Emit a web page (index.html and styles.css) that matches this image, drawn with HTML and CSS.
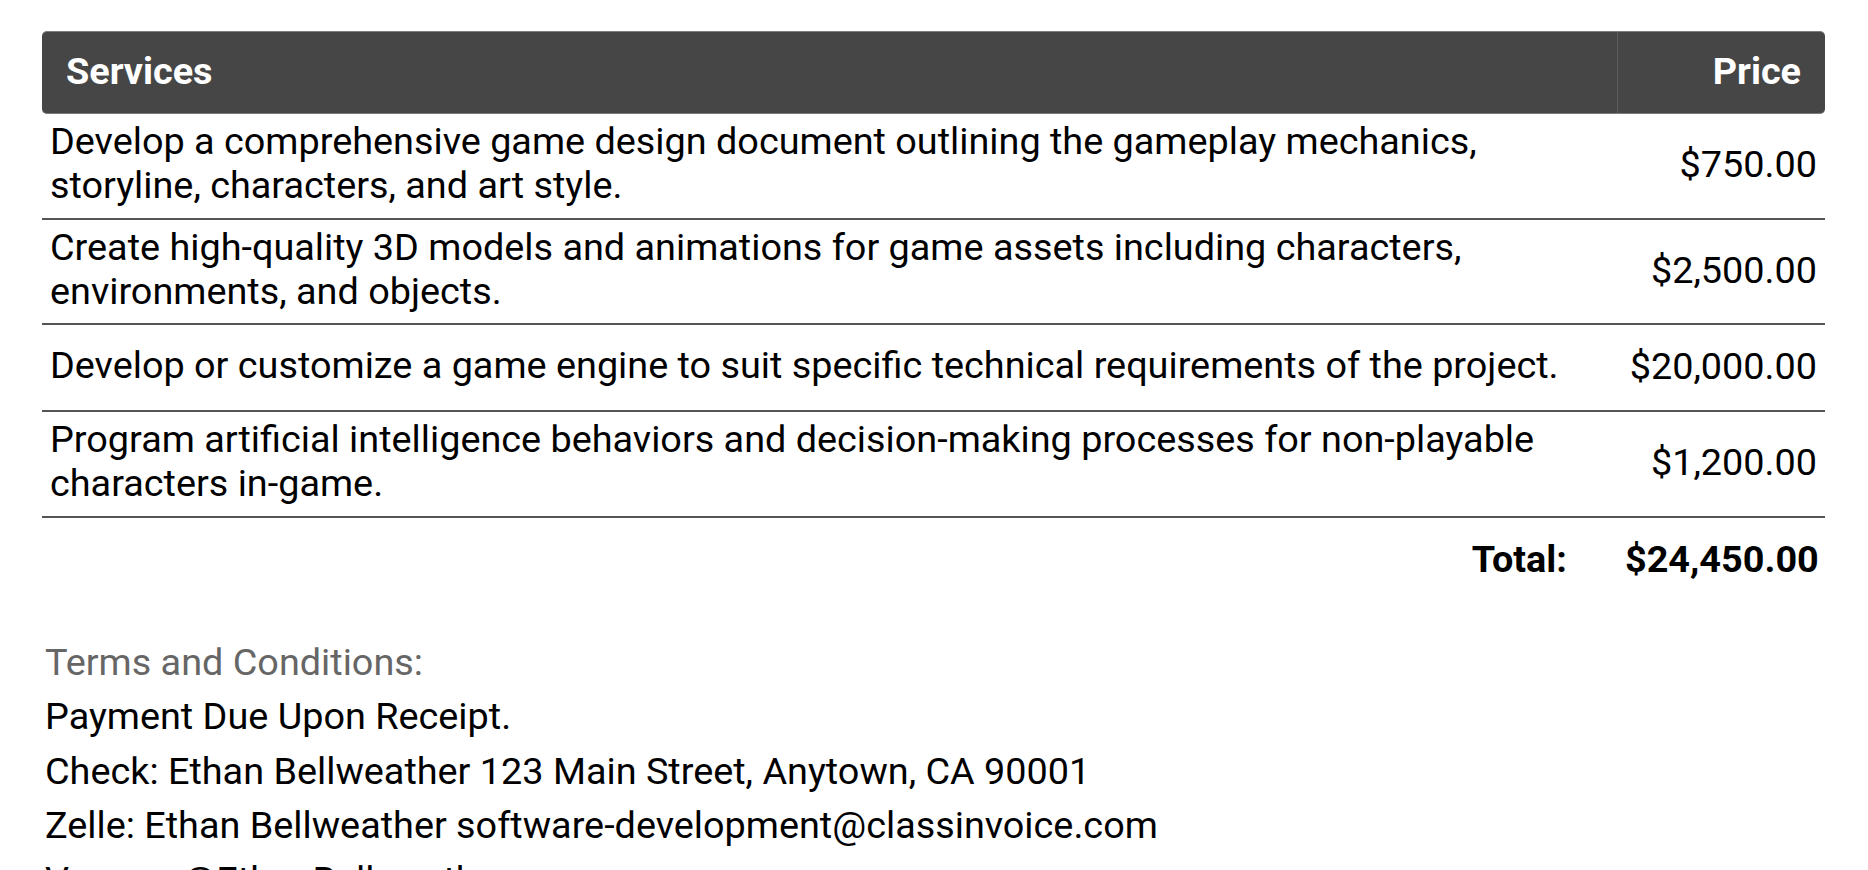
FILE: index.html
```html
<!DOCTYPE html>
<html lang="en">
<head>
<meta charset="utf-8">
<title>Invoice</title>
<link rel="stylesheet" href="styles.css">
</head>
<body>
<main class="invoice">
  <table class="items">
    <colgroup>
      <col class="col-desc">
      <col class="col-price">
    </colgroup>
    <thead>
      <tr>
        <th class="th-services">Services</th>
        <th class="th-price">Price</th>
      </tr>
    </thead>
    <tbody>
      <tr>
        <td class="desc">Develop a comprehensive game design document outlining the gameplay mechanics, storyline, characters, and art style.</td>
        <td class="price">$750.00</td>
      </tr>
      <tr>
        <td class="desc">Create high-quality 3D models and animations for game assets including characters, environments, and objects.</td>
        <td class="price">$2,500.00</td>
      </tr>
      <tr>
        <td class="desc">Develop or customize a game engine to suit specific technical requirements of the project.</td>
        <td class="price">$20,000.00</td>
      </tr>
      <tr>
        <td class="desc">Program artificial intelligence behaviors and decision-making processes for non-playable characters in-game.</td>
        <td class="price">$1,200.00</td>
      </tr>
    </tbody>
    <tfoot>
      <tr>
        <td class="total-label">Total:</td>
        <td class="total-value">$24,450.00</td>
      </tr>
    </tfoot>
  </table>

  <section class="terms">
    <p class="terms-title">Terms and Conditions:</p>
    <p class="terms-line">Payment Due Upon Receipt.</p>
    <p class="terms-line">Check: Ethan Bellweather 123 Main Street, Anytown, CA 90001</p>
    <p class="terms-line">Zelle: Ethan Bellweather software-development@classinvoice.com</p>
    <p class="terms-line">Venmo: @EthanBellweather</p>
  </section>
</main>
</body>
</html>
```
FILE: styles.css
```css
html {
  overflow: hidden;
}

body {
  margin: 0;
  background: #ffffff;
  color: #000000;
  font-family: Roboto, "Liberation Sans", Arial, sans-serif;
  font-size: 37.8px;
  line-height: 44px;
}

.invoice {
  padding: 31px 43px 0 42px;
}

.items {
  width: 100%;
  border-collapse: separate;
  border-spacing: 0;
  table-layout: fixed;
}

.col-price {
  width: 208px;
}

.items th {
  background: #464646;
  color: #ffffff;
  font-weight: 700;
  padding: 17px 24px 20px;
  border-top: 1px solid #7e7e7e;
  border-bottom: 1px solid #7a7a7a;
}

.th-services {
  text-align: left;
  border-top-left-radius: 5px;
  border-bottom-left-radius: 5px;
}

.th-price {
  text-align: right;
  border-left: 1px solid #5c5c5c;
  border-top-right-radius: 5px;
  border-bottom-right-radius: 5px;
}

.items tbody td {
  border-bottom: 2px solid #555555;
  vertical-align: middle;
}

.desc {
  padding: 5px 8px 10.5px;
  text-align: left;
}

.price {
  padding: 19px 8px 22px;
  text-align: right;
  white-space: nowrap;
}

.total-label,
.total-value {
  font-weight: 700;
  text-align: right;
  padding-top: 19px;
  padding-bottom: 22px;
  white-space: nowrap;
}

.total-label {
  padding-right: 50px;
}

.total-value {
  padding-left: 8px;
  padding-right: 8px;
}

.terms {
  margin-top: 32px;
  padding-left: 3px;
}

.terms p {
  margin: 0;
  line-height: 54.5px;
}

.terms-title {
  color: #666666;
}
```
